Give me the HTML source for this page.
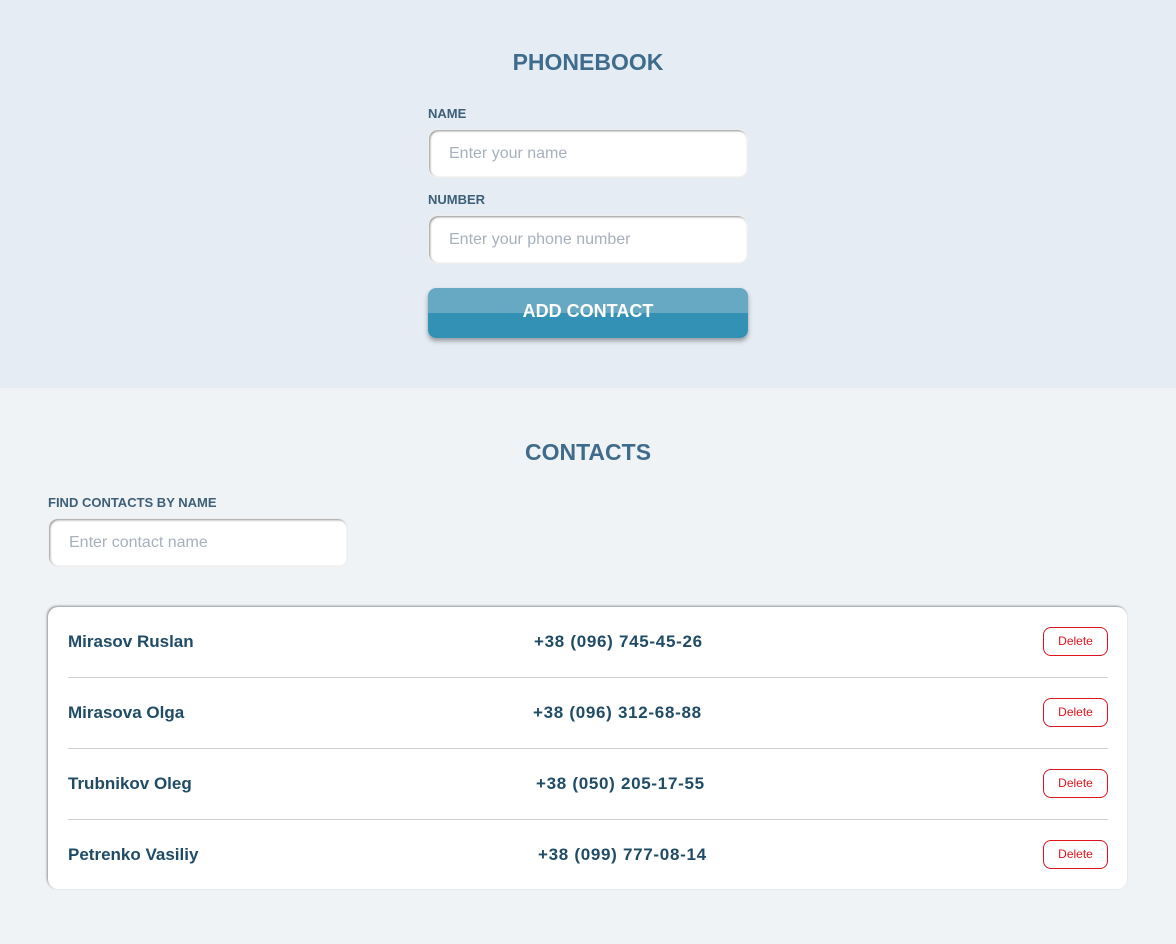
<!DOCTYPE html>
<html><head><style>
*{margin:0;padding:0;box-sizing:border-box}
body{width:1176px;height:944px;background:#eff3f6;font-family:"Liberation Sans",sans-serif;position:relative;overflow:hidden}
.top{position:absolute;left:0;top:0;width:1176px;height:388px;background:#e5ecf3}
h1,h2{position:absolute;width:1176px;text-align:center;color:#3f6c8c;font-size:23px;font-weight:bold;left:0}
.lbl{position:absolute;color:#3d5f78;font-size:13px;font-weight:bold}
.inp{position:absolute;width:320px;height:49px;background:#fff;border-radius:10px;box-shadow:inset 1px 1px 2px rgba(0,0,0,.45);border:1px solid #eee;color:#a7b0bd;font-size:16px;padding:15px 0 0 20px}
.btn{position:absolute;left:428px;top:288px;width:320px;height:50px;border-radius:8px;overflow:hidden;background:linear-gradient(#67a8c2 0,#67a8c2 50%,#3391b5 50%);box-shadow:0 3px 5px rgba(0,0,0,.35);color:#fff;font-weight:bold;font-size:18px;text-align:center;line-height:47px}
.list{position:absolute;left:48px;top:607px;width:1079px;height:282px;background:#fff;border-radius:10px;box-shadow:-1px -1px 2px rgba(0,0,0,.4)}
.row{position:absolute;left:20px;width:1040px;height:71px;border-bottom:1px solid #cfcfcf}
.row:last-child{border-bottom:none}
.nm{position:absolute;left:0;top:25px;font-size:17px;font-weight:bold;color:#1f4b66}
.ph{position:absolute;top:25px;font-size:17px;font-weight:bold;color:#1f4b66;letter-spacing:0.7px}
.del{position:absolute;right:0;top:20px;width:65px;height:29px;border:1px solid #e0141c;border-radius:8px;color:#e0141c;font-size:12px;text-align:center;line-height:27px}
</style></head><body>
<div class="top"></div>
<h1 style="top:49px">PHONEBOOK</h1>
<div class="lbl" style="left:428px;top:106px">NAME</div>
<div class="inp" style="left:428px;top:129px">Enter your name</div>
<div class="lbl" style="left:428px;top:192px">NUMBER</div>
<div class="inp" style="left:428px;top:215px">Enter your phone number</div>
<div class="btn">ADD CONTACT</div>
<h2 style="top:439px">CONTACTS</h2>
<div class="lbl" style="left:48px;top:495px">FIND CONTACTS BY NAME</div>
<div class="inp" style="left:48px;top:518px;width:300px">Enter contact name</div>
<div class="list">
<div class="row" style="top:0"><span class="nm">Mirasov Ruslan</span><span class="ph" style="left:466px">+38 (096) 745-45-26</span><div class="del">Delete</div></div>
<div class="row" style="top:71px"><span class="nm">Mirasova Olga</span><span class="ph" style="left:465px">+38 (096) 312-68-88</span><div class="del">Delete</div></div>
<div class="row" style="top:142px"><span class="nm">Trubnikov Oleg</span><span class="ph" style="left:468px">+38 (050) 205-17-55</span><div class="del">Delete</div></div>
<div class="row" style="top:213px"><span class="nm">Petrenko Vasiliy</span><span class="ph" style="left:470px">+38 (099) 777-08-14</span><div class="del">Delete</div></div>
</div>
</body></html>
